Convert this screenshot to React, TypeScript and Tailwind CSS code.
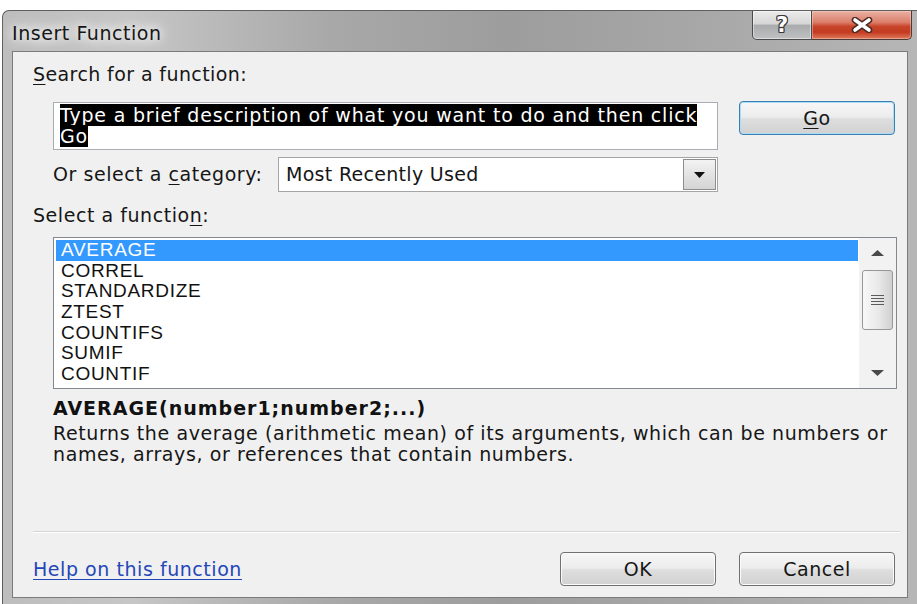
import React from "react";

const FUNCTIONS = ["AVERAGE", "CORREL", "STANDARDIZE", "ZTEST", "COUNTIFS", "SUMIF", "COUNTIF"];

const pushButton =
  "flex h-[34px] w-[156px] items-center justify-center rounded-[4px] border bg-[linear-gradient(180deg,#f7f7f7_0%,#ececec_47%,#dedede_53%,#d1d1d1_100%)]";

function Key({ children }: { children: React.ReactNode }) {
  return <span className="underline decoration-1 underline-offset-[3px]">{children}</span>;
}

function Triangle({ up = false, w = 13, h = 6, color = "#4a4a4a" }: { up?: boolean; w?: number; h?: number; color?: string }) {
  const pts = up ? `0,${h} ${w / 2},0 ${w},${h}` : `0,0 ${w},0 ${w / 2},${h}`;
  return (
    <svg width={w} height={h} viewBox={`0 0 ${w} ${h}`}>
      <polygon points={pts} fill={color} />
    </svg>
  );
}

function CaptionButtons() {
  return (
    <div className="mr-[5px] flex">
      <div className="flex h-[29px] w-[60px] items-center justify-center rounded-bl-[5px] border border-t-0 border-[#4b4b4b] bg-[linear-gradient(180deg,#ebebeb_0%,#d6d6d6_45%,#a9abad_52%,#bfc1c3_100%)] shadow-[inset_0_0_0_1px_rgba(255,255,255,0.45)]">
        <span className="font-['DejaVu_Sans',sans-serif] text-[21px] font-bold leading-none tracking-normal text-white [text-shadow:1px_0_0_#3a3a3a,-1px_0_0_#3a3a3a,0_1px_0_#3a3a3a,0_-1px_0_#3a3a3a,1px_1px_0_#3a3a3a,-1px_-1px_0_#3a3a3a,1px_-1px_0_#3a3a3a,-1px_1px_0_#3a3a3a]">
          ?
        </span>
      </div>
      <div className="flex h-[29px] w-[100px] items-center justify-center rounded-br-[5px] border border-l-0 border-t-0 border-[#4b3b38] bg-[linear-gradient(180deg,#e9b1a4_0%,#dc7f6b_40%,#c8452b_55%,#c33a1f_75%,#e07a5c_100%)] shadow-[inset_0_0_0_1px_rgba(255,220,210,0.4)]">
        <svg width="22" height="16" viewBox="0 0 22 16">
          <path d="M4 3 L18 13 M18 3 L4 13" stroke="#4a2a24" strokeWidth="6.5" strokeLinecap="round" />
          <path d="M4 3 L18 13 M18 3 L4 13" stroke="#ffffff" strokeWidth="3.6" strokeLinecap="round" />
        </svg>
      </div>
    </div>
  );
}

function Scrollbar() {
  return (
    <div className="flex w-[37px] flex-col items-center bg-[#f2f2f2]">
      <div className="flex h-[30px] w-full items-center justify-center">
        <Triangle up />
      </div>
      <div className="mt-[2px] flex h-[60px] w-[31px] flex-col items-center justify-center gap-[2px] rounded-[3px] border border-[#979797] bg-[linear-gradient(90deg,#f8f8f8_0%,#e8e8e8_55%,#d0d0d0_100%)]">
        {[0, 1, 2, 3].map((i) => (
          <span key={i} className="h-px w-[13px] bg-[#5c5c5c]" />
        ))}
      </div>
      <div className="flex-1" />
      <div className="flex h-[30px] w-full items-center justify-center">
        <Triangle />
      </div>
    </div>
  );
}

export default function App() {
  return (
    <div className="h-[604px] w-[917px] overflow-hidden bg-white pt-[10px] font-['DejaVu_Sans',sans-serif] text-[19px] tracking-[0.55px] text-[#161616]">
      {/* window frame */}
      <div className="ml-[2px] flex h-[594px] flex-col rounded-tl-[7px] border-l border-t border-[#5e5e5e] bg-[linear-gradient(90deg,#bdbdbd_0%,#c6c6c6_14%,#a8a8a8_36%,#9d9d9d_55%,#a6a6a6_74%,#b6b6b6_100%)]">
        <div className="flex h-[40px] items-start justify-between">
          <span className="pl-[9px] pt-[11px] leading-[22px] [text-shadow:0_0_8px_#fff,0_0_14px_#fff,0_0_20px_#fff]">
            Insert Function
          </span>
          <CaptionButtons />
        </div>

        {/* client area */}
        <div className="mb-[6px] ml-[9px] mr-[9px] flex flex-1 flex-col border border-[#7b7b7b] bg-[#f0f0f0] pl-[20px] pr-[12px]">
          <div className="mt-[11px] leading-[22px] tracking-[0.4px]">
            <Key>S</Key>earch for a function:
          </div>

          <div className="mt-[16px] flex items-start">
            <div className="ml-[20px] mt-[1px] h-[48px] w-[665px] border border-[#abadb3] bg-white pl-[6px] pt-[2px] leading-[20.5px] tracking-[0.8px]">
              <span className="bg-black text-white">Type a brief description of what you want to do and then click </span>
              <br />
              <span className="bg-black text-white">Go</span>
            </div>
            <button className={`${pushButton} ml-[21px] border-[#3c7fb1] shadow-[inset_0_0_0_1px_#a9dcf7]`}>
              <Key>G</Key>o
            </button>
          </div>

          <div className="mt-[7px] flex h-[35px] items-center">
            <span className="ml-[20px] w-[225px]">
              Or select a <Key>c</Key>ategory:
            </span>
            <div className="flex h-[35px] w-[440px] border border-[#a5a5a5] bg-white">
              <span className="flex-1 pl-[7px] leading-[33px] tracking-[0.3px]">Most Recently Used</span>
              <div className="m-px flex w-[33px] items-center justify-center border border-[#8d8d8d] bg-[linear-gradient(180deg,#f3f3f3_0%,#e3e3e3_50%,#d4d4d4_100%)]">
                <Triangle w={11} h={6} color="#111" />
              </div>
            </div>
          </div>

          <div className="mt-[12px] leading-[22px]">
            Select a functio<Key>n</Key>:
          </div>

          <div className="ml-[20px] mt-[11px] flex h-[152px] w-[844px] border border-[#828790] bg-white font-['Liberation_Sans',Arial,sans-serif] tracking-[0.7px]">
            <ul className="flex-1 py-[2px] pl-[2px] pr-px">
              {FUNCTIONS.map((fn, i) => (
                <li
                  key={fn}
                  className={`h-[20.7px] pl-[5px] leading-[20.7px] ${i === 0 ? "bg-[#3399ff] text-white" : "text-[#111]"}`}
                >
                  {fn}
                </li>
              ))}
            </ul>
            <Scrollbar />
          </div>

          <div className="mt-[8px] pl-[20px] font-bold leading-[22px] tracking-[1px] text-[#111]">
            AVERAGE(number1;number2;...)
          </div>
          <p className="mt-[4px] pl-[20px] leading-[21px] tracking-[0.6px]">
            Returns the average (arithmetic mean) of its arguments, which can be numbers or
            <br />
            names, arrays, or references that contain numbers.
          </p>

          <div className="flex-1" />

          <div className="-mr-[5px] h-[2px] border-t border-b border-t-[#d5d5d5] border-b-white" />

          <div className="mb-[11px] mt-[19px] flex h-[34px] items-center">
            <a href="#" className="text-[#2447b8] underline decoration-1 underline-offset-[3px]">
              Help on this function
            </a>
            <button className={`${pushButton} ml-auto border-[#707070] shadow-[inset_0_0_0_1px_#fbfbfb]`}>OK</button>
            <button className={`${pushButton} ml-[23px] border-[#707070] shadow-[inset_0_0_0_1px_#fbfbfb]`}>Cancel</button>
          </div>
        </div>
      </div>
    </div>
  );
}
